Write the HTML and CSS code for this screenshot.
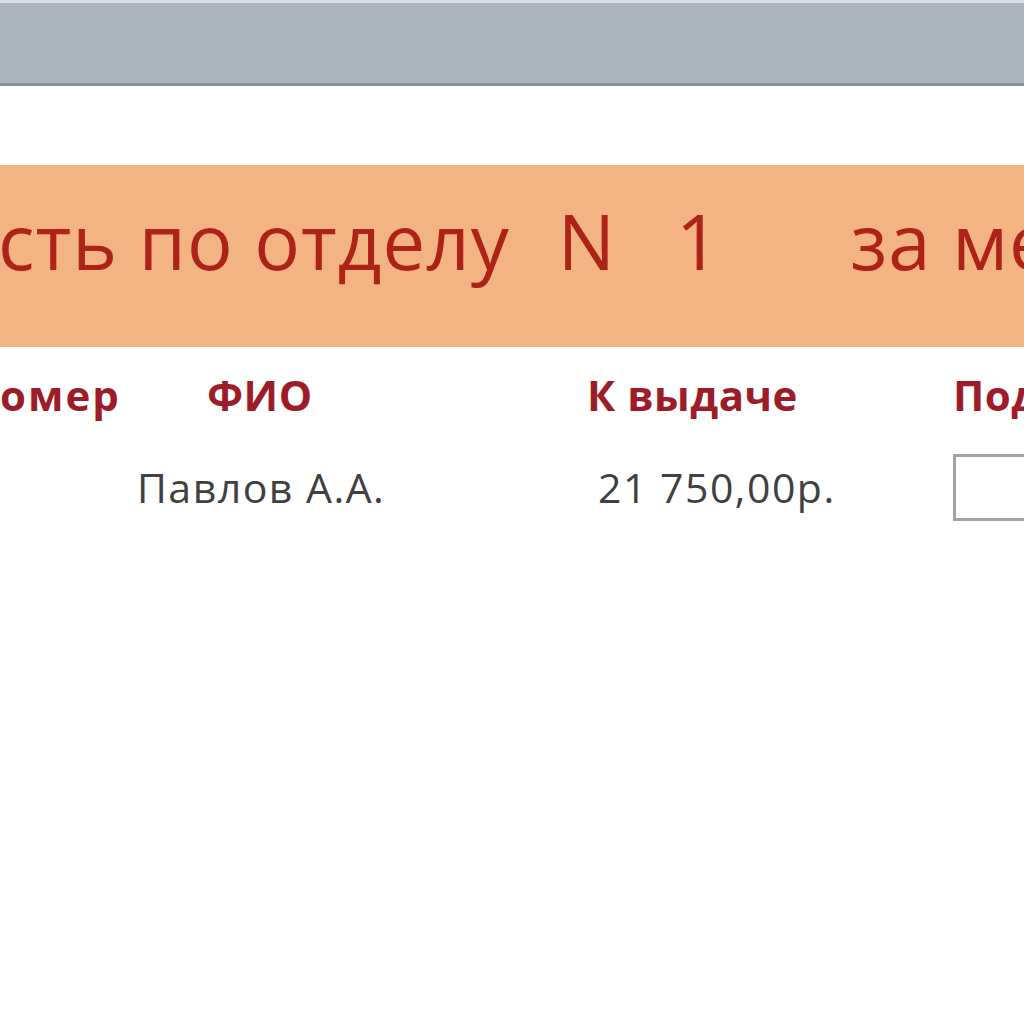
FILE: index.html
```html
<!DOCTYPE html>
<html lang="ru">
<head>
<meta charset="utf-8">
<link rel="stylesheet" href="styles.css">
</head>
<body>
<div class="topbar"></div>
<div class="report">
  <div class="title-band">
    <span class="t-label">сть по отделу</span>
    <span class="t-n">N</span>
    <span class="t-num">1</span>
    <span class="t-month">за ме</span>
  </div>
  <div class="row head">
    <span class="c1 h1">омер</span>
    <span class="c2">ФИО</span>
    <span class="c3">К выдаче</span>
    <span class="c4">Под</span>
  </div>
  <div class="row data">
    <span class="c1"></span>
    <span class="c2 d2">Павлов А.А.</span>
    <span class="c3 d3">21 750,00р.</span>
    <span class="c4"><span class="check"></span></span>
  </div>
</div>
</body>
</html>
```

FILE: styles.css
```css
html, body {
  margin: 0;
  padding: 0;
  background: #ffffff;
  width: 1024px;
  height: 1024px;
  overflow: hidden;
}
.topbar {
  background: #abb3bd;
  border-top: 3px solid #d9dfe8;
  border-bottom: 3px solid #878e95;
  box-sizing: border-box;
  height: 86px;
}
.report {
  padding-top: 79px;
  font-family: "Open Sans", "Noto Sans", sans-serif;
  overflow: hidden;
}
.title-band {
  height: 182px;
  background: #f4b383;
  color: #ad2318;
  display: flex;
  align-items: center;
  font-size: 76px;
  letter-spacing: 1px;
  white-space: nowrap;
  overflow: hidden;
  line-height: 1;
  padding-bottom: 30px;
  box-sizing: border-box;
}
.t-label { margin-left: -2px; }
.t-n { margin-left: 48px; }
.t-num { margin-left: 60px; }
.t-month { margin-left: 130px; }
.row {
  display: flex;
  white-space: nowrap;
  overflow: hidden;
}
.row > span {
  flex-shrink: 0;
  box-sizing: border-box;
}
.head {
  color: #9c1d27;
  font-weight: 700;
  font-size: 42px;
  letter-spacing: 0.5px;
  height: 100px;
  align-items: center;
  padding-bottom: 6px;
  box-sizing: border-box;
}
.h1 { letter-spacing: 2px; }
.c1 { width: 207px; }
.c2 { width: 380px; }
.c3 { width: 366px; }
.c4 { width: 200px; }
.data {
  color: #404040;
  font-size: 41px;
  letter-spacing: 1.5px;
  height: 80px;
  align-items: center;
}
.d2 { margin-left: -70px; margin-right: 70px; }
.d3 { padding-left: 11px; }
.check {
  display: block;
  width: 90px;
  height: 67px;
  border: 3px solid #a3a3a3;
  box-sizing: border-box;
  background: #fff;
}
```
